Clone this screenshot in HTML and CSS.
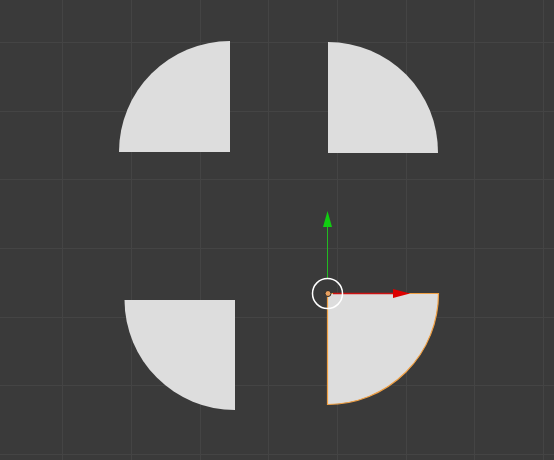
FILE: index.html
```html
<!DOCTYPE html>
<html lang="en">
<head>
    <meta charset="UTF-8">
    <title>Viewport</title>
    <link rel="stylesheet" href="styles.css">
</head>
<body>
    <div id="viewport">
        <svg class="scene" width="554" height="460" viewBox="0 0 554 460">
            <!-- floor grid -->
            <g class="grid">
                <line x1="62.5" y1="0" x2="62.5" y2="460"/>
                <line x1="131.5" y1="0" x2="131.5" y2="460"/>
                <line x1="200.5" y1="0" x2="200.5" y2="460"/>
                <line x1="268.5" y1="0" x2="268.5" y2="460"/>
                <line x1="337.5" y1="0" x2="337.5" y2="460"/>
                <line x1="406.5" y1="0" x2="406.5" y2="460"/>
                <line x1="474.5" y1="0" x2="474.5" y2="460"/>
                <line x1="543.5" y1="0" x2="543.5" y2="460"/>
                <line x1="0" y1="42.5" x2="554" y2="42.5"/>
                <line x1="0" y1="111.5" x2="554" y2="111.5"/>
                <line x1="0" y1="179.5" x2="554" y2="179.5"/>
                <line x1="0" y1="248.5" x2="554" y2="248.5"/>
                <line x1="0" y1="317.5" x2="554" y2="317.5"/>
                <line x1="0" y1="385.5" x2="554" y2="385.5"/>
                <line x1="0" y1="454.5" x2="554" y2="454.5"/>
            </g>

            <!-- quarter discs -->
            <path class="mesh" d="M230,152 L119,152 A111,111 0 0 1 230,41 Z"/>
            <path class="mesh" d="M328,153 L328,42 A110,110 0 0 1 438,153 Z"/>
            <path class="mesh" d="M235,300 L235,410 A110.5,110.5 0 0 1 124.5,300 Z"/>
            <path class="mesh selected" d="M327.5,293.5 L438.5,293.5 A111,111 0 0 1 327.5,404.5 Z"/>

            <!-- transform gizmo -->
            <g class="gizmo">
                <line class="axis-y" x1="327.5" y1="226" x2="327.5" y2="279"/>
                <polygon class="head-y" points="323,227 332,227 327.5,211"/>
                <line class="axis-x" x1="333" y1="293.5" x2="394" y2="293.5"/>
                <polygon class="head-x" points="393,289 393,298 410,293.5"/>
                <circle class="ring" cx="327.5" cy="293.5" r="15"/>
                <circle class="origin" cx="328" cy="293.5" r="3"/>
            </g>
        </svg>
    </div>
</body>
</html>
```

FILE: styles.css
```css
body { margin: 0; background: #3a3a3a; }
#viewport { width: 554px; height: 460px; overflow: hidden; background: #3a3a3a; }
.scene { display: block; }
.grid line { stroke: #444444; stroke-width: 1; shape-rendering: crispEdges; }
.mesh { fill: #dddddd; }
.selected { stroke: #f0a044; stroke-width: 1.2; }
.axis-y { stroke: #22bb22; stroke-width: 1; }
.head-y { fill: #11cc11; }
.axis-x { stroke: #cc1111; stroke-width: 1.5; }
.head-x { fill: #dd0000; }
.ring { fill: none; stroke: #ffffff; stroke-width: 1.5; }
.origin { fill: #e8a060; stroke: #2a2a2a; stroke-width: 1; }
```
